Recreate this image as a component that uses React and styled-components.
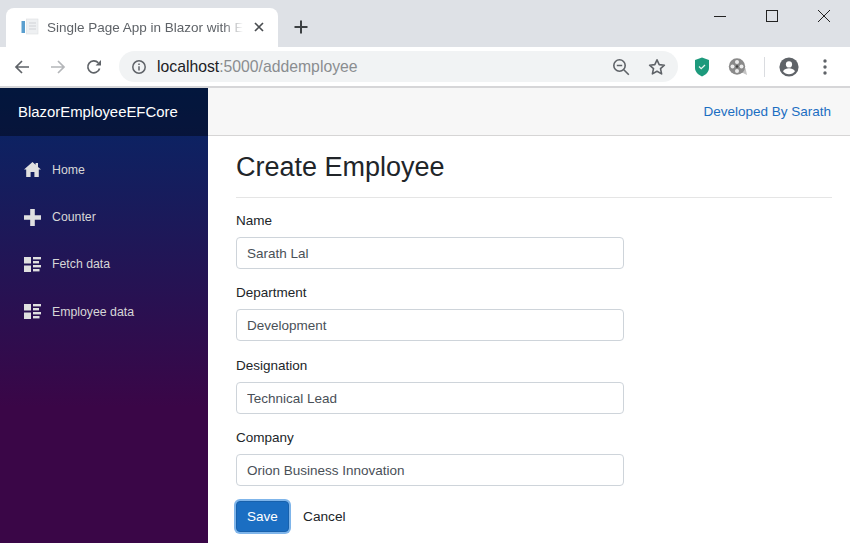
import React from "react";
import styled, { createGlobalStyle } from "styled-components";

const Global = createGlobalStyle`
  html, body { margin: 0; padding: 0; width: 850px; height: 543px; overflow: hidden; background: #fff; }
  * { box-sizing: border-box; }
  #root { width: 850px; height: 543px; overflow: hidden; font-family: "Liberation Sans", Arial, sans-serif; }
`;

const Window = styled.div`display: flex; flex-direction: column; width: 850px; height: 543px;`;
const TabStrip = styled.div`height: 47px; background: #dee1e6; display: flex; align-items: flex-end; padding-left: 6px; position: relative;`;
const Tab = styled.div`
  width: 272px; height: 39px; background: #fff; border-radius: 8px 8px 0 0;
  display: flex; align-items: center; padding: 0 13px 1px 15px; gap: 8px;
`;
const TabTitle = styled.span`
  flex: 1; font-size: 13.5px; color: #5f6368; white-space: nowrap; overflow: hidden;
  -webkit-mask-image: linear-gradient(to right, #000 89%, transparent 99%);
  mask-image: linear-gradient(to right, #000 89%, transparent 99%);
`;
const NewTab = styled.div`width: 46px; height: 39px; display: flex; align-items: center; justify-content: center; padding-bottom: 1px;`;
const WinControls = styled.div`position: absolute; top: 0; right: 0; display: flex;`;
const WinBtn = styled.div`width: 52px; height: 32px; display: flex; align-items: center; justify-content: center;`;

const Toolbar = styled.div`height: 41px; background: #fff; display: flex; align-items: center; padding: 0 0 0 4px; border-bottom: 2px solid #d6d6d8;`;
const NavBtn = styled.div`width: 36px; height: 32px; display: flex; align-items: center; justify-content: center;`;
const Omnibox = styled.div`
  width: 559px; height: 31px; margin-left: 7px; background: #f1f3f4; border-radius: 16px;
  display: flex; align-items: center; padding: 0 3px 0 12px;
`;
const Url = styled.span`flex: 1; margin-left: 10px; font-size: 15.75px; color: #8a8d90;`;
const Host = styled.span`color: #202124;`;
const OmniIcon = styled.div`width: 36px; height: 28px; display: flex; align-items: center; justify-content: center;`;
const Extensions = styled.div`display: flex; align-items: center; flex: 1; padding-left: 6px;`;
const ExtSlot = styled.div`width: 36px; display: flex; align-items: center; justify-content: center;`;
const Sep = styled.div`width: 1px; height: 20px; background: #dadce0; margin: 0 6px 0 8px;`;

const Page = styled.div`flex: 1; display: flex; min-height: 0;`;
const Sidebar = styled.aside`width: 208px; background-image: linear-gradient(180deg, #052767 0%, #3a0647 70%); display: flex; flex-direction: column;`;
const Brand = styled.div`height: 48px; background: rgba(0,0,0,0.4); display: flex; align-items: center; padding-left: 18px; color: #fff; font-size: 14.9px;`;
const Nav = styled.nav`display: flex; flex-direction: column; padding-top: 10px;`;
const NavItem = styled.div`height: 47.4px; display: flex; align-items: center; padding-left: 23px; gap: 11px; color: #d7d7d7; font-size: 12.3px;`;
const NavIcon = styled.div`width: 18px; height: 18px; display: flex; align-items: center; justify-content: center;`;

const Main = styled.main`flex: 1; display: flex; flex-direction: column; min-width: 0; background: #fff;`;
const TopRow = styled.div`height: 48px; background: #f7f7f7; border-bottom: 1px solid #d6d5d5; display: flex; align-items: center; justify-content: flex-end; padding-right: 19px;`;
const DevLink = styled.a`color: #1b6ec2; font-size: 13.5px;`;
const Content = styled.div`flex: 1; padding: 15px 18px 0 28px;`;
const Title = styled.h1`margin: 0; font-size: 27px; font-weight: 400; line-height: 33px; color: #212529;`;
const Rule = styled.hr`margin: 13px 0 14px; border: 0; border-top: 1px solid #e5e5e5;`;
const Field = styled.div`display: flex; flex-direction: column; margin-bottom: 15.4px;`;
const Label = styled.label`font-size: 13.5px; line-height: 17px; color: #212529; margin-bottom: 8px;`;
const Input = styled.input`
  width: 388px; height: 32px; padding: 1px 10px 0; border: 1px solid #ced4da; border-radius: 4px;
  font: 13.5px "Liberation Sans", Arial, sans-serif; color: #495057; background: #fff; outline: none;
`;
const Actions = styled.div`display: flex; align-items: center; margin-top: -1px;`;
const SaveBtn = styled.button`
  width: 53px; height: 31px; border-radius: 4px; border: 1px solid #1861ac; background: #1b6ec2; color: #fff;
  font: 13.5px "Liberation Sans", Arial, sans-serif; box-shadow: 0 0 0 2px #7fb5ea; padding: 0;
`;
const CancelLink = styled.a`margin-left: 14px; font-size: 13.7px; color: #212529;`;

const ListIcon = () => (
  <svg width="17" height="15" viewBox="0 0 17 15" fill="#e0e0e0">
    <rect x="0" y="0" width="7" height="6.5" />
    <rect x="0" y="8.5" width="7" height="6.5" />
    <rect x="9" y="0" width="8" height="2.4" />
    <rect x="9" y="4" width="6" height="2.4" />
    <rect x="9" y="8" width="8" height="2.4" />
    <rect x="9" y="12" width="6.5" height="2.4" />
  </svg>
);

const nav = [
  ["Home", <svg key="h" width="17" height="15" viewBox="0 0 17 15" fill="#e0e0e0"><path d="M8.5 0 L11.6 2.8 V1 H14 V5 L17 7.6 L14.8 7.6 L14.8 15 L10.4 15 L10.4 10 L6.6 10 L6.6 15 L2.2 15 L2.2 7.6 L0 7.6 Z" /></svg>],
  ["Counter", <svg key="c" width="17" height="17" viewBox="0 0 17 17" fill="#e0e0e0"><path d="M6.2 0h4.6v6.2H17v4.6h-6.2V17H6.2v-6.2H0V6.2h6.2z" /></svg>],
  ["Fetch data", <ListIcon key="f" />],
  ["Employee data", <ListIcon key="e" />],
];

const fields = [
  ["Name", "Sarath Lal"],
  ["Department", "Development"],
  ["Designation", "Technical Lead"],
  ["Company", "Orion Business Innovation"],
];

export default function App() {
  return (
    <Window>
      <Global />
      <TabStrip>
        <Tab>
          <svg width="18" height="18" viewBox="0 0 18 18">
            <rect x="0.500" y="3" width="3.500" height="12" fill="#5a9fcf" />
            <rect x="5.500" y="1" width="11.500" height="15" fill="#eef0f2" stroke="#dcdfe2" strokeWidth="0.6" />
            <path d="M8 5h7M8 8h7M8 11h7" stroke="#cfd2d6" strokeWidth="1.2" />
          </svg>
          <TabTitle>Single Page App in Blazor with EF Core</TabTitle>
          <svg width="12" height="12" viewBox="0 0 12 12"><path d="M2 2l8 8M10 2l-8 8" stroke="#4a4d51" strokeWidth="1.7" /></svg>
        </Tab>
        <NewTab>
          <svg width="14" height="14" viewBox="0 0 14 14"><path d="M7 0.5v13M0.5 7h13" stroke="#3c4043" strokeWidth="2" /></svg>
        </NewTab>
        <WinControls>
          <WinBtn><svg width="14" height="14" viewBox="0 0 14 14"><path d="M1 7.500h12" stroke="#222" strokeWidth="1" /></svg></WinBtn>
          <WinBtn><svg width="14" height="14" viewBox="0 0 14 14"><rect x="1.500" y="1.500" width="11" height="11" fill="none" stroke="#222" strokeWidth="1" /></svg></WinBtn>
          <WinBtn><svg width="14" height="14" viewBox="0 0 14 14"><path d="M1 1l12 12M13 1L1 13" stroke="#222" strokeWidth="1" /></svg></WinBtn>
        </WinControls>
      </TabStrip>
      <Toolbar>
        <NavBtn><svg width="16" height="16" viewBox="0 0 16 16" fill="none"><path d="M15 8H2M8 2L2 8l6 6" stroke="#5f6368" strokeWidth="1.7" /></svg></NavBtn>
        <NavBtn><svg width="16" height="16" viewBox="0 0 16 16" fill="none"><path d="M1 8h13M8 2l6 6-6 6" stroke="#b4b6b9" strokeWidth="1.7" /></svg></NavBtn>
        <NavBtn><svg width="16" height="16" viewBox="0 0 16 16" fill="none"><path d="M13.600 9.500A6 6 0 1 1 12.300 3.800" stroke="#5f6368" strokeWidth="1.700" /><path d="M15 1v5.400H9.600z" fill="#5f6368" /></svg></NavBtn>
        <Omnibox>
          <svg width="16" height="16" viewBox="0 0 16 16" fill="none"><circle cx="8" cy="8" r="6.200" stroke="#5f6368" strokeWidth="1.500" /><path d="M8 7.200v4.200M8 4.600v1.400" stroke="#5f6368" strokeWidth="1.500" /></svg>
          <Url><Host>localhost</Host>:5000/addemployee</Url>
          <OmniIcon><svg width="18" height="18" viewBox="0 0 18 18" fill="none"><circle cx="7.500" cy="7.500" r="5.700" stroke="#5f6368" strokeWidth="1.600" /><path d="M4.800 7.500h5.400M11.800 11.800l5 5" stroke="#5f6368" strokeWidth="1.600" /></svg></OmniIcon>
          <OmniIcon><svg width="18" height="18" viewBox="0 0 18 18" fill="none"><path d="M9 1.800l2.200 4.800 5.200.6-3.900 3.500 1.100 5.200L9 13.300l-4.600 2.600 1.100-5.200-3.900-3.500 5.200-.6z" stroke="#5f6368" strokeWidth="1.600" strokeLinejoin="round" /></svg></OmniIcon>
        </Omnibox>
        <Extensions>
          <ExtSlot>
            <svg width="16" height="20" viewBox="0 0 16 20"><path d="M8 0.500L15 3v8c0 4-3.500 7-7 8.500C4.500 18 1 15 1 11V3z" fill="#1d9a7c" /><path d="M5 9.500l2.200 2.200L11 8" fill="none" stroke="#e6f5f0" strokeWidth="1.300" /></svg>
          </ExtSlot>
          <ExtSlot>
            <svg width="20" height="20" viewBox="0 0 20 20"><path d="M13 15l6 3-1.500-7z" fill="#c4c4c4" /><circle cx="9" cy="9.500" r="8.200" fill="#8a8a8a" /><circle cx="9" cy="9.500" r="1.300" fill="#444" /><circle cx="9" cy="5" r="2" fill="#ececec" /><circle cx="9" cy="14" r="2" fill="#ececec" /><circle cx="4.500" cy="9.500" r="2" fill="#ececec" /><circle cx="13.500" cy="9.500" r="2" fill="#ececec" /></svg>
          </ExtSlot>
          <Sep />
          <ExtSlot>
            <svg width="20" height="20" viewBox="0 0 20 20"><circle cx="10" cy="10" r="9.600" fill="#5f6368" /><circle cx="10" cy="7.400" r="3.100" fill="#fff" /><path d="M4 14.200c1.400-2.200 3.800-3 6-3s4.600.8 6 3c-1.400 1.900-3.600 3-6 3s-4.600-1.100-6-3z" fill="#fff" /></svg>
          </ExtSlot>
          <ExtSlot>
            <svg width="4" height="16" viewBox="0 0 4 16" fill="#5f6368"><circle cx="2" cy="2" r="1.700" /><circle cx="2" cy="8" r="1.700" /><circle cx="2" cy="14" r="1.700" /></svg>
          </ExtSlot>
        </Extensions>
      </Toolbar>
      <Page>
        <Sidebar>
          <Brand>BlazorEmployeeEFCore</Brand>
          <Nav>
            {nav.map(([t, icon]) => (
              <NavItem key={t}><NavIcon>{icon}</NavIcon>{t}</NavItem>
            ))}
          </Nav>
        </Sidebar>
        <Main>
          <TopRow><DevLink>Developed By Sarath</DevLink></TopRow>
          <Content>
            <Title>Create Employee</Title>
            <Rule />
            {fields.map(([l, v]) => (
              <Field key={l}>
                <Label>{l}</Label>
                <Input defaultValue={v} readOnly />
              </Field>
            ))}
            <Actions>
              <SaveBtn>Save</SaveBtn>
              <CancelLink>Cancel</CancelLink>
            </Actions>
          </Content>
        </Main>
      </Page>
    </Window>
  );
}
